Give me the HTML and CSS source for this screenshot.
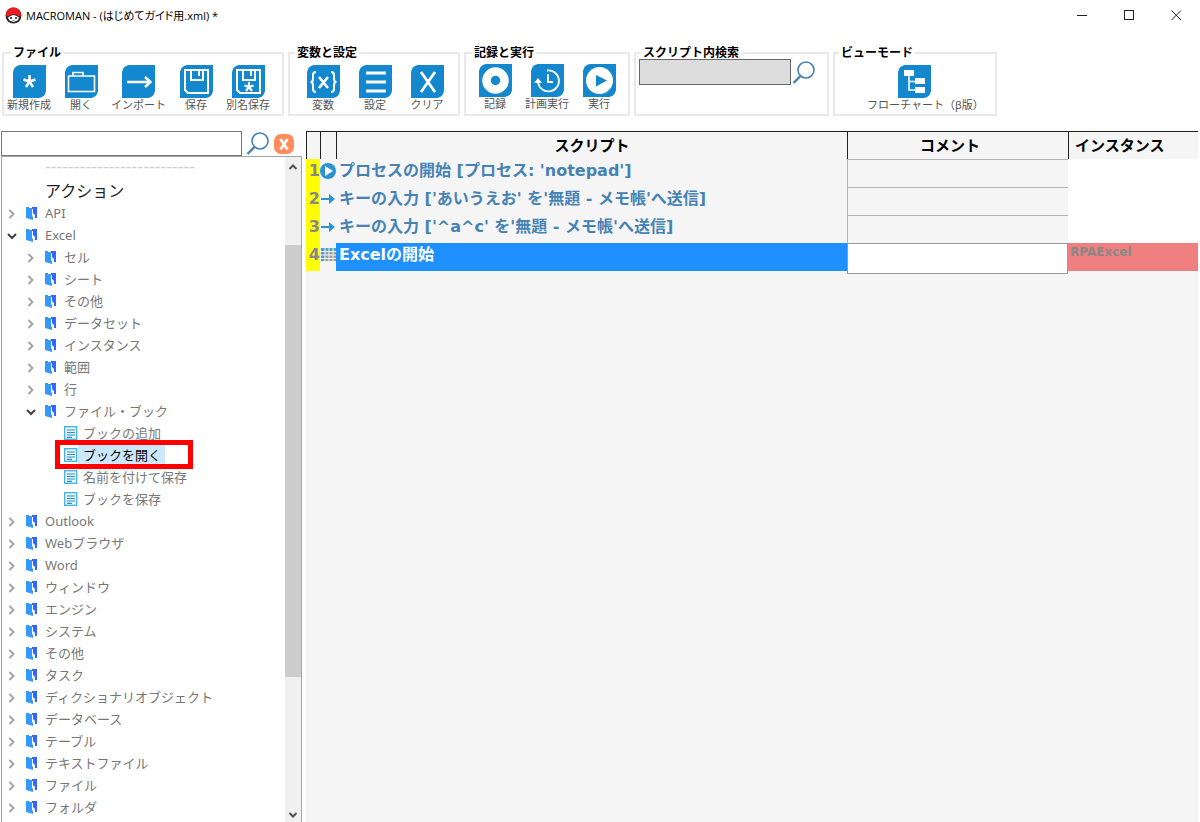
FILE: index.html
```html
<!DOCTYPE html>
<html lang="ja">

<head>
    <meta charset="UTF-8">
    <meta name="viewport" content="width=device-width, initial-scale=1.0">
    <title>MACROMAN - (はじめてガイド用.xml) *</title>
    <link rel="stylesheet" href="styles.css">
</head>

<body>

    <!-- Icon sprites -->
    <svg class="sprites" aria-hidden="true">
        <symbol id="tile" viewBox="0 0 33 33">
            <path d="M7 0H33V26Q32 32 26 33H0V7Q1 1 7 0Z" fill="#1488ce" />
        </symbol>
        <symbol id="arrow" viewBox="0 0 14 14">
            <path d="M4.500 4L8.500 8L4.500 12" fill="none" stroke="#a0a0a0" stroke-width="1.800" />
        </symbol>
        <symbol id="arrow-open" viewBox="0 0 14 14">
            <path d="M3 6L7 10L11 6" fill="none" stroke="#404040" stroke-width="2" />
        </symbol>
        <symbol id="folder" viewBox="0 0 14 14">
            <path d="M0 1H3V2H6V10L7 11V14L0 12Z" fill="#3399ff" />
            <path d="M6 1H11V12H9V9L7 7V3H6Z" fill="#3366ff" />
        </symbol>
        <symbol id="doc" viewBox="0 0 14 14">
            <rect x=".7" y=".7" width="12" height="12.600" fill="#e9f7fd" stroke="#41b1dc" stroke-width="1.300" />
            <path d="M3 4H11M3 6.500H11M3 9H11M3 11.300H8" stroke="#2b8ec5" stroke-width="1.200" />
        </symbol>
        <symbol id="lens" viewBox="0 0 24 24">
            <circle cx="14" cy="9" r="8" fill="none" stroke="#4682b4" stroke-width="1.600" />
            <path d="M8.500 15L1.500 22" stroke="#4682b4" stroke-width="2.400" />
        </symbol>
        <symbol id="send" viewBox="0 0 16 16">
            <path d="M1 7H9V3L15 8L9 13V9H1Z" fill="#2b93d1" />
        </symbol>
    </svg>

    <header class="titlebar">
        <svg class="logo" viewBox="0 0 17 17">
            <circle cx="8.500" cy="8.500" r="8" fill="#2b2224" />
            <path d="M1 8A7.500 7.500 0 0 1 16 8Q15 10 14 9.500Q8.500 5 3 9.500Q2 10 1 8Z" fill="#ee1c1c" />
            <path d="M3 10.500Q8.500 5.500 14 10.500Q13.500 14 8.500 15Q3.500 14 3 10.500Z" fill="#fff" />
            <circle cx="6" cy="11" r="1.100" fill="#222" />
            <circle cx="11" cy="11" r="1.100" fill="#222" />
            <path d="M7.500 13.500H9.500" stroke="#777" />
        </svg>
        <span class="title">MACROMAN - (はじめてガイド用.xml) *</span>
        <div class="window-buttons">
            <button aria-label="最小化"><svg viewBox="0 0 11 11"><path d="M0 5.500H10" /></svg></button>
            <button aria-label="最大化"><svg viewBox="0 0 11 11"><rect x=".5" y=".5" width="9" height="9" /></svg></button>
            <button aria-label="閉じる"><svg viewBox="0 0 11 11"><path d="M.5 .5L10 10M10 .5L.5 10" /></svg></button>
        </div>
    </header>

    <div class="toolbar">
        <fieldset class="group group-file">
            <legend>ファイル</legend>
            <button class="tool">
                <svg viewBox="0 0 33 33"><use href="#tile" /><path d="M16.500 10V16.500M16.500 16.500L10.500 14.500M16.500 16.500L22.500 14.500M16.500 16.500L13 22M16.500 16.500L20 22" stroke="#fff" stroke-width="2.600" /></svg>
                新規作成
            </button>
            <button class="tool">
                <svg viewBox="0 0 33 33"><use href="#tile" /><path d="M3.500 11H29.500V26.500H3.500ZM8 11V7.500H18V11" fill="none" stroke="#fff" stroke-width="1.600" /></svg>
                開く
            </button>
            <button class="tool">
                <svg viewBox="0 0 33 33"><use href="#tile" /><path d="M5 17H28M23 12L28.500 17L23 22" fill="none" stroke="#fff" stroke-width="2.400" /></svg>
                インポート
            </button>
            <button class="tool">
                <svg viewBox="0 0 33 33"><use href="#tile" /><path d="M5 5H28V28H8L5 25ZM11 5V15H23V5M19 5V11" fill="none" stroke="#fff" stroke-width="2" /></svg>
                保存
            </button>
            <button class="tool">
                <svg viewBox="0 0 33 33"><use href="#tile" /><path d="M5 5H28V28H8L5 25ZM11 5V15H23V5M19 5V11" fill="none" stroke="#fff" stroke-width="2" /><path d="M17 17V22M17 22L12.500 20.500M17 22L21.500 20.500M17 22L14 26M17 22L20 26" stroke="#fff" stroke-width="2.200" /></svg>
                別名保存
            </button>
        </fieldset>

        <fieldset class="group group-settings">
            <legend>変数と設定</legend>
            <button class="tool">
                <svg viewBox="0 0 33 33"><use href="#tile" /><path d="M9 7Q6 7 6 10V14Q6 17 3.500 17Q6 17 6 20V24Q6 27 9 27M24 7Q27 7 27 10V14Q27 17 29.500 17Q27 17 27 20V24Q27 27 24 27" fill="none" stroke="#fff" stroke-width="2" /><path d="M12 12L21 23M21 12L12 23" stroke="#fff" stroke-width="2.600" /></svg>
                変数
            </button>
            <button class="tool">
                <svg viewBox="0 0 33 33"><use href="#tile" /><path d="M7 8H27M7 17H27M7 26H27" stroke="#fff" stroke-width="2.800" /></svg>
                設定
            </button>
            <button class="tool">
                <svg viewBox="0 0 33 33"><use href="#tile" /><path d="M10 7L24 27M24 7L10 27" stroke="#fff" stroke-width="2.800" /></svg>
                クリア
            </button>
        </fieldset>

        <fieldset class="group group-run">
            <legend>記録と実行</legend>
            <button class="tool">
                <svg viewBox="0 0 33 33"><use href="#tile" /><circle cx="16.500" cy="16.500" r="9" fill="none" stroke="#fff" stroke-width="8.500" /></svg>
                記録
            </button>
            <button class="tool">
                <svg viewBox="0 0 33 33"><use href="#tile" /><path d="M16 6.500A10.500 10.500 0 1 1 7 18M17 10V18H22" fill="none" stroke="#fff" stroke-width="1.800" /><path d="M3 19L7 14L11 19Z" fill="#fff" /></svg>
                計画実行
            </button>
            <button class="tool">
                <svg viewBox="0 0 33 33"><use href="#tile" /><circle cx="16.500" cy="16.500" r="13.500" fill="#fff" /><path d="M13 11L24 16.500L13 22.500Z" fill="#1488ce" /></svg>
                実行
            </button>
        </fieldset>

        <fieldset class="group group-search">
            <legend>スクリプト内検索</legend>
            <input type="text" aria-label="スクリプト内検索">
            <button class="lens" aria-label="検索"><svg><use href="#lens" /></svg></button>
        </fieldset>

        <fieldset class="group group-view">
            <legend>ビューモード</legend>
            <button class="tool">
                <svg viewBox="0 0 33 33"><use href="#tile" /><path d="M11 10V25H18M11 16.500H18" fill="none" stroke="#fff" stroke-width="1.600" /><path d="M6 5H16V11H6ZM17 13H27V19H17ZM17 22H27V28H17Z" fill="#fff" /></svg>
                フローチャート（β版）
            </button>
        </fieldset>
    </div>

    <main class="workspace">
        <aside class="sidebar">
            <div class="action-search">
                <input type="text" aria-label="アクション検索">
                <button class="lens" aria-label="検索"><svg><use href="#lens" /></svg></button>
                <button class="clear" aria-label="クリア"><svg viewBox="0 0 20 20"><rect width="20" height="20" rx="7" fill="#ff8c5a" /><path d="M6.500 5L13.500 15.500M13.500 5L6.500 15.500" stroke="#fff" stroke-width="2.600" /></svg></button>
            </div>

            <div class="tree-panel">
                <div class="tree">
                    <div class="separator">--------------------------</div>
                    <h2>アクション</h2>
                    <ul>
                        <li><div class="node"><button aria-label="開く"><svg><use href="#arrow" /></svg></button><svg><use href="#folder" /></svg><span>API</span></div></li>
                        <li>
                            <div class="node"><button aria-label="閉じる"><svg><use href="#arrow-open" /></svg></button><svg><use href="#folder" /></svg><span>Excel</span></div>
                            <ul>
                                <li><div class="node"><button aria-label="開く"><svg><use href="#arrow" /></svg></button><svg><use href="#folder" /></svg><span>セル</span></div></li>
                                <li><div class="node"><button aria-label="開く"><svg><use href="#arrow" /></svg></button><svg><use href="#folder" /></svg><span>シート</span></div></li>
                                <li><div class="node"><button aria-label="開く"><svg><use href="#arrow" /></svg></button><svg><use href="#folder" /></svg><span>その他</span></div></li>
                                <li><div class="node"><button aria-label="開く"><svg><use href="#arrow" /></svg></button><svg><use href="#folder" /></svg><span>データセット</span></div></li>
                                <li><div class="node"><button aria-label="開く"><svg><use href="#arrow" /></svg></button><svg><use href="#folder" /></svg><span>インスタンス</span></div></li>
                                <li><div class="node"><button aria-label="開く"><svg><use href="#arrow" /></svg></button><svg><use href="#folder" /></svg><span>範囲</span></div></li>
                                <li><div class="node"><button aria-label="開く"><svg><use href="#arrow" /></svg></button><svg><use href="#folder" /></svg><span>行</span></div></li>
                                <li>
                                    <div class="node"><button aria-label="閉じる"><svg><use href="#arrow-open" /></svg></button><svg><use href="#folder" /></svg><span>ファイル・ブック</span></div>
                                    <ul>
                                        <li><div class="node leaf"><svg><use href="#doc" /></svg><span>ブックの追加</span></div></li>
                                        <li><div class="node leaf selected"><svg><use href="#doc" /></svg><span>ブックを開く</span></div></li>
                                        <li><div class="node leaf"><svg><use href="#doc" /></svg><span>名前を付けて保存</span></div></li>
                                        <li><div class="node leaf"><svg><use href="#doc" /></svg><span>ブックを保存</span></div></li>
                                    </ul>
                                </li>
                            </ul>
                        </li>
                        <li><div class="node"><button aria-label="開く"><svg><use href="#arrow" /></svg></button><svg><use href="#folder" /></svg><span>Outlook</span></div></li>
                        <li><div class="node"><button aria-label="開く"><svg><use href="#arrow" /></svg></button><svg><use href="#folder" /></svg><span>Webブラウザ</span></div></li>
                        <li><div class="node"><button aria-label="開く"><svg><use href="#arrow" /></svg></button><svg><use href="#folder" /></svg><span>Word</span></div></li>
                        <li><div class="node"><button aria-label="開く"><svg><use href="#arrow" /></svg></button><svg><use href="#folder" /></svg><span>ウィンドウ</span></div></li>
                        <li><div class="node"><button aria-label="開く"><svg><use href="#arrow" /></svg></button><svg><use href="#folder" /></svg><span>エンジン</span></div></li>
                        <li><div class="node"><button aria-label="開く"><svg><use href="#arrow" /></svg></button><svg><use href="#folder" /></svg><span>システム</span></div></li>
                        <li><div class="node"><button aria-label="開く"><svg><use href="#arrow" /></svg></button><svg><use href="#folder" /></svg><span>その他</span></div></li>
                        <li><div class="node"><button aria-label="開く"><svg><use href="#arrow" /></svg></button><svg><use href="#folder" /></svg><span>タスク</span></div></li>
                        <li><div class="node"><button aria-label="開く"><svg><use href="#arrow" /></svg></button><svg><use href="#folder" /></svg><span>ディクショナリオブジェクト</span></div></li>
                        <li><div class="node"><button aria-label="開く"><svg><use href="#arrow" /></svg></button><svg><use href="#folder" /></svg><span>データベース</span></div></li>
                        <li><div class="node"><button aria-label="開く"><svg><use href="#arrow" /></svg></button><svg><use href="#folder" /></svg><span>テーブル</span></div></li>
                        <li><div class="node"><button aria-label="開く"><svg><use href="#arrow" /></svg></button><svg><use href="#folder" /></svg><span>テキストファイル</span></div></li>
                        <li><div class="node"><button aria-label="開く"><svg><use href="#arrow" /></svg></button><svg><use href="#folder" /></svg><span>ファイル</span></div></li>
                        <li><div class="node"><button aria-label="開く"><svg><use href="#arrow" /></svg></button><svg><use href="#folder" /></svg><span>フォルダ</span></div></li>
                    </ul>
                </div>
                <div class="scrollbar">
                    <svg viewBox="0 0 16 16"><path d="M4.500 12L8 8.500L11.500 12" /></svg>
                    <div class="track"><div class="thumb"></div></div>
                    <svg viewBox="0 0 16 16"><path d="M4.500 7L8 10.500L11.500 7" /></svg>
                </div>
            </div>
        </aside>

        <section class="script">
            <table>
                <thead>
                    <tr>
                        <th class="col-no"></th>
                        <th class="col-icon"></th>
                        <th>スクリプト</th>
                        <th class="col-comment">コメント</th>
                        <th class="col-instance">インスタンス</th>
                    </tr>
                </thead>
                <tbody>
                    <tr>
                        <td class="no">1</td>
                        <td class="icon"><svg viewBox="0 0 16 16"><circle cx="8" cy="8" r="8" fill="#2b93d1" /><path d="M5 3L13 8L5 13Z" fill="#fff" /></svg></td>
                        <td class="step">プロセスの開始 [プロセス: 'notepad']</td>
                        <td class="comment"><input type="text" aria-label="コメント 1"></td>
                        <td class="instance"></td>
                    </tr>
                    <tr>
                        <td class="no">2</td>
                        <td class="icon"><svg><use href="#send" /></svg></td>
                        <td class="step">キーの入力 ['あいうえお' を'無題 - メモ帳'へ送信]</td>
                        <td class="comment"><input type="text" aria-label="コメント 2"></td>
                        <td class="instance"></td>
                    </tr>
                    <tr>
                        <td class="no">3</td>
                        <td class="icon"><svg><use href="#send" /></svg></td>
                        <td class="step">キーの入力 ['^a^c' を'無題 - メモ帳'へ送信]</td>
                        <td class="comment"><input type="text" aria-label="コメント 3"></td>
                        <td class="instance"></td>
                    </tr>
                    <tr class="current">
                        <td class="no">4</td>
                        <td class="icon"><svg viewBox="0 0 16 16"><path d="M1 1H4.500V4H1ZM1 5H4.500V7.500H1ZM1 8.500H4.500V11H1ZM1 12H4.500V14H1ZM5.500 1H8.500V4H5.500ZM9.500 1H12.500V4H9.500ZM13.500 1H16V4H13.500Z" fill="#4d9fc8" /><path d="M5.500 5H8.500V7.500H5.500ZM9.500 5H12.500V7.500H9.500ZM13.500 5H16V7.500H13.500ZM5.500 8.500H8.500V11H5.500ZM9.500 8.500H12.500V11H9.500ZM13.500 8.500H16V11H13.500ZM5.500 12H8.500V14H5.500ZM9.500 12H12.500V14H9.500ZM13.500 12H16V14H13.500Z" fill="#999" /></svg></td>
                        <td class="step">Excelの開始</td>
                        <td class="comment"><input type="text" aria-label="コメント 4"></td>
                        <td class="instance">RPAExcel</td>
                    </tr>
                </tbody>
            </table>
        </section>
    </main>

</body>

</html>
```

FILE: styles.css
```css
*,
*::after {
    box-sizing: border-box;
}

body {
    display: flex;
    flex-direction: column;
    height: 100vh;
    margin: 0;
    overflow: hidden;
    background-color: #fff;
    font-family: "Noto Sans", "Noto Sans CJK JP", sans-serif;
    font-size: 13px;
    color: #000;
}

button {
    padding: 0;
    border: 0;
    background: none;
    font: inherit;
    color: inherit;
}

svg {
    display: block;
    flex: none;
}

.sprites {
    display: none;
}

/* Title bar */
.titlebar {
    display: flex;
    align-items: center;
    height: 30px;
    padding-left: 5px;
}

.logo {
    width: 17px;
    height: 17px;
}

.title {
    flex: 1;
    margin-left: 4px;
    font-family: "Open Sans", "Noto Sans CJK JP", sans-serif;
    font-size: 11px;
    font-feature-settings: "palt";
}

.window-buttons {
    display: flex;
}

.window-buttons button {
    display: flex;
    justify-content: center;
    width: 47px;
}

.window-buttons svg {
    width: 11px;
    height: 11px;
    fill: none;
    stroke: #222;
}

/* Toolbar */
.toolbar {
    display: flex;
    gap: 4px;
    padding: 15px 2px 0;
}

.group {
    display: flex;
    align-items: flex-start;
    gap: 8px;
    height: 71px;
    min-width: 0;
    margin: 0;
    padding: 4px 3px 0;
    border: 2px solid #e9e9e9;
}

.group legend {
    margin-left: 4px;
    padding: 0 2px;
    font-size: 12px;
    font-weight: bold;
    line-height: 16px;
}

.group-file {
    width: 282px;
}

.group-settings {
    width: 172px;
    padding-left: 11px;
}

.group-settings legend {
    margin-left: -6px;
}

.group-run {
    width: 166px;
    padding: 3px 0 0 7px;
}

.group-run legend {
    margin-left: -1px;
}

.group-search {
    gap: 1px;
    width: 195px;
    padding: 0 3px;
}

.group-search legend {
    margin-left: 2px;
}

.group-view {
    width: 164px;
    padding-left: 32px;
}

.group-view legend {
    margin-left: -28px;
}

.tool {
    display: flex;
    flex-direction: column;
    align-items: center;
    min-width: 44px;
    font-size: 11px;
    line-height: 14px;
    color: #555;
    white-space: nowrap;
}

.tool svg {
    width: 33px;
    height: 33px;
}

.group-view .tool {
    align-items: flex-start;
}

.group-view .tool svg {
    margin-left: 31px;
}

.group-search input {
    width: 152px;
    height: 26px;
    margin-top: -2px;
    border: 1px solid #666;
    background-color: #dcdcdc;
}

.lens svg {
    width: 24px;
    height: 24px;
}

/* Workspace */
.workspace {
    display: flex;
    flex: 1;
    gap: 4px;
    min-height: 0;
    padding: 15px 2px 0 1px;
}

.sidebar {
    display: flex;
    flex-direction: column;
    width: 301px;
}

.action-search {
    display: flex;
    align-items: center;
    gap: 4px;
    height: 25px;
}

.action-search input {
    width: 241px;
    height: 25px;
    border: 1px solid #777;
}

.clear svg {
    width: 20px;
    height: 20px;
}

.tree-panel {
    display: flex;
    flex: 1;
    min-height: 0;
    border: solid #a0a4ac;
    border-width: 1px 1px 0;
}

.tree {
    flex: 1;
    overflow: hidden;
    padding: 1px 0 0 3px;
    line-height: 22px;
    color: #777;
}

.separator {
    height: 22px;
    padding-left: 40px;
    font-family: "DejaVu Sans", sans-serif;
    font-size: 16px;
    line-height: 18px;
    color: #ccc;
}

.tree h2 {
    margin: 0;
    padding-left: 40px;
    font-size: 16px;
    font-weight: normal;
    color: #222;
}

.tree ul {
    margin: 0;
    padding: 0;
    list-style: none;
}

.tree ul ul {
    padding-left: 19px;
}

.node {
    display: flex;
    align-items: center;
    height: 22px;
    white-space: nowrap;
}

.node svg {
    width: 14px;
    height: 14px;
}

.node button {
    margin-right: 7px;
}

.node span {
    margin-left: 5px;
}

.leaf {
    position: relative;
    margin-left: 21px;
}

.selected span {
    margin-left: 0;
    padding: 0 4px 0 5px;
    background-color: #cce8ff;
    color: #000;
}

/* Red frame around the selected action */
.selected::after {
    content: "";
    position: absolute;
    z-index: 1;
    top: -4px;
    left: -9px;
    width: 138px;
    height: 29px;
    border: 5px solid #f00;
}

.scrollbar {
    display: flex;
    flex-direction: column;
    width: 16px;
    background-color: #f0f0f0;
}

.scrollbar svg {
    width: 16px;
    height: 16px;
    fill: none;
    stroke: #505050;
    stroke-width: 2;
}

.track {
    flex: 1;
    padding-top: 72px;
}

.thumb {
    height: 77%;
    background-color: #cdcdcd;
}

/* Script table */
.script {
    flex: 1;
    background-color: #f5f5f5;
    font-family: "DejaVu Sans", "Noto Sans CJK JP", sans-serif;
    font-weight: bold;
}

.script table {
    width: 100%;
    border-spacing: 0;
    table-layout: fixed;
}

.script th {
    height: 28px;
    padding: 0;
    border-top: 1px solid #222;
    border-left: 1px solid #222;
    font-size: 15px;
    line-height: 22px;
}

.col-no {
    width: 14px;
}

.col-icon {
    width: 16px;
}

.script .col-comment {
    width: 221px;
    padding-right: 16px;
}

.script .col-instance {
    width: 130px;
    padding-left: 6px;
    text-align: left;
}

.script td {
    height: 28px;
    padding: 0;
    font-size: 16px;
    line-height: 24px;
    vertical-align: top;
    white-space: nowrap;
}

.script .no {
    background-color: #ff0;
    color: #888;
    text-align: right;
}

.icon svg {
    width: 16px;
    height: 16px;
    margin-top: 4px;
}

.script .step {
    padding-left: 3px;
    color: #4682b4;
}

.comment input {
    display: block;
    width: 100%;
    height: 28px;
    border: solid #b4b4b4;
    border-width: 1px 0 0 1px;
    background: none;
}

.script .instance {
    padding-left: 2px;
    background-color: #fff;
    font-size: 12px;
    line-height: 18px;
    color: #888;
}

.script .current .step {
    background-color: #1e90ff;
    color: #fff;
}

.current .comment input {
    height: 31px;
    margin-bottom: -3px;
    border: 1px solid #999;
    background-color: #fff;
}

.script .current .instance {
    background-color: #f08080;
}
```
